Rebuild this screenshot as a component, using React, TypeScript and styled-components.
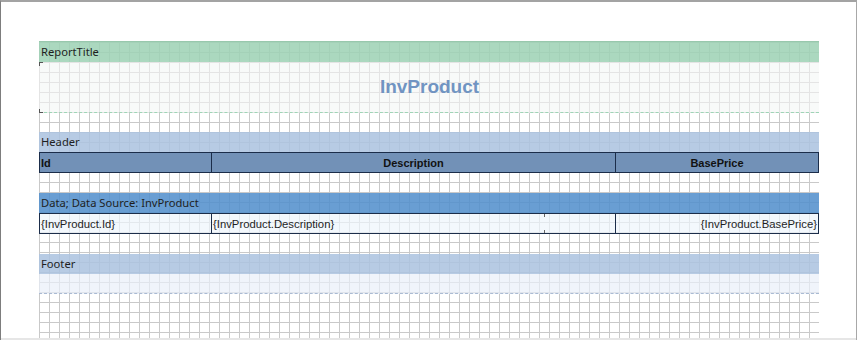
import React from "react";
import styled, { createGlobalStyle } from "styled-components";

const Global = createGlobalStyle`
  html, body { margin: 0; padding: 0; background: #ffffff; }
  body { width: 858px; height: 340px; overflow: hidden; }
`;

const Frame = styled.div`
  box-sizing: border-box;
  width: 857px;
  height: 340px;
  border-top: 2px solid #a3a3a3;
  border-left: 1px solid #7d7d7d;
  border-right: 1px solid #a8a8a8;
  background: #ffffff;
  display: flex;
  flex-direction: column;
  overflow: hidden;
`;

const Canvas = styled.div`
  flex: 1;
  min-height: 0;
  padding: 39px 0 0 38px;
  overflow: hidden;
`;

const BottomStrip = styled.div`
  height: 2px;
  background: #e6e6e6;
`;

const Page = styled.div`
  width: 780px;
  height: 300px;
  display: flex;
  flex-direction: column;
  background-color: #ffffff;
  background-image: linear-gradient(to right, #c9c9c9 0, #c9c9c9 1px, transparent 1px, transparent 10px),
    linear-gradient(to bottom, #c9c9c9 0, #c9c9c9 1px, transparent 1px, transparent 10px);
  background-size: 10px 10px;
  background-position: 0 1px;
  font-family: "Liberation Sans", Arial, sans-serif;
`;

const Band = styled.div<{ $tone: "green" | "light" | "blue" }>`
  box-sizing: border-box;
  height: ${(p) => (p.$tone === "green" ? 21 : 20)}px;
  flex-shrink: 0;
  display: flex;
  align-items: center;
  padding-left: 2px;
  padding-bottom: 1px;
  font-family: "Noto Sans", "Open Sans", sans-serif;
  font-size: 11.2px;
  color: #1e1e1e;
  background: ${(p) =>
    p.$tone === "green"
      ? "rgba(157, 210, 181, 0.86)"
      : p.$tone === "light"
      ? "rgba(171, 194, 223, 0.86)"
      : "rgba(80, 142, 204, 0.86)"};
  border-top: ${(p) => (p.$tone === "green" ? "1px solid #98c8ad" : "none")};
`;

const TitleArea = styled.div`
  position: relative;
  box-sizing: border-box;
  height: 51px;
  flex-shrink: 0;
  display: flex;
  align-items: center;
  justify-content: center;
  background-color: #f8faf9;
  background-image: linear-gradient(to right, #e4e4e4 0, #e4e4e4 1px, transparent 1px, transparent 10px),
    linear-gradient(to bottom, #e4e4e4 0, #e4e4e4 1px, transparent 1px, transparent 10px);
  background-size: 10px 10px;
  background-position: 0 0;
  border-bottom: 1px dashed #9ed5b6;
  &::before,
  &::after {
    content: "";
    position: absolute;
    left: 0;
    width: 3px;
    height: 3px;
    border-left: 1px solid #555;
  }
  &::before {
    top: 0;
    border-top: 1px solid #555;
  }
  &::after {
    bottom: -1px;
    border-bottom: 1px solid #555;
  }
`;

const TitleText = styled.div`
  font-family: "Liberation Sans", Arial, sans-serif;
  font-weight: bold;
  font-size: 19px;
  color: #7094c2;
  margin-left: 1px;
`;

const Gap = styled.div<{ $h: number }>`
  height: ${(p) => p.$h}px;
  flex-shrink: 0;
`;

const Row = styled.div<{ $kind: "head" | "data" }>`
  box-sizing: border-box;
  height: 21px;
  flex-shrink: 0;
  display: grid;
  grid-template-columns: 171px 404px 1fr;
  border: 1px solid #1b2d4a;
  width: 780px;
  background: ${(p) => (p.$kind === "head" ? "#7291b7" : "rgba(238, 245, 252, 0.7)")};
  font-family: "Liberation Sans", Arial, sans-serif;
  font-size: ${(p) => (p.$kind === "head" ? "11px" : "11.3px")};
  font-weight: ${(p) => (p.$kind === "head" ? "bold" : "normal")};
  color: ${(p) => (p.$kind === "head" ? "#111" : "#1f1f1f")};
`;

const Cell = styled.div<{ $align: "left" | "center" | "right"; $first?: boolean }>`
  display: flex;
  align-items: center;
  padding: 0 1px;
  justify-content: ${(p) =>
    p.$align === "left" ? "flex-start" : p.$align === "center" ? "center" : "flex-end"};
  border-left: ${(p) => (p.$first ? "none" : "1px solid #1b2d4a")};
  white-space: nowrap;
  position: relative;
`;

const Handle = styled.span`
  position: absolute;
  left: 332px;
  width: 1px;
  height: 3px;
  background: #666;
  &:first-child {
    top: 0;
  }
  &:last-child {
    bottom: 0;
  }
`;

const FooterArea = styled.div`
  box-sizing: border-box;
  height: 20px;
  flex-shrink: 0;
  background: rgba(234, 240, 250, 0.7);
  border-bottom: 1px dashed #a9bad3;
`;

export default function App() {
  return (
    <>
      <Global />
      <Frame>
        <Canvas>
          <Page>
            <Band $tone="green">ReportTitle</Band>
            <TitleArea>
              <TitleText>InvProduct</TitleText>
            </TitleArea>
            <Gap $h={19} />
            <Band $tone="light">Header</Band>
            <Row $kind="head">
              <Cell $align="left" $first>
                Id
              </Cell>
              <Cell $align="center">Description</Cell>
              <Cell $align="center">BasePrice</Cell>
            </Row>
            <Gap $h={20} />
            <Band $tone="blue">Data; Data Source: InvProduct</Band>
            <Row $kind="data">
              <Cell $align="left" $first>
                {"{InvProduct.Id}"}
              </Cell>
              <Cell $align="left">
                {"{InvProduct.Description}"}
                <Handle />
                <Handle />
              </Cell>
              <Cell $align="right">{"{InvProduct.BasePrice}"}</Cell>
            </Row>
            <Gap $h={20} />
            <Band $tone="light">Footer</Band>
            <FooterArea />
          </Page>
        </Canvas>
        <BottomStrip />
      </Frame>
    </>
  );
}
